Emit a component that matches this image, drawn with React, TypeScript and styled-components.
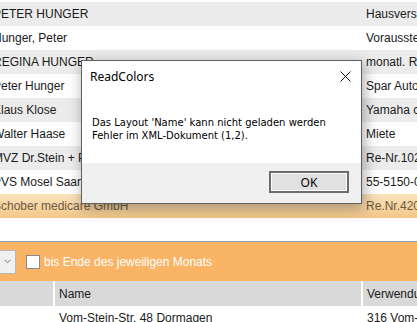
import React from "react";
import styled, {createGlobalStyle} from "styled-components";

type Row = {name: string, purpose: string};

const rows: Row[] = [
    {name: 'PETER HUNGER', purpose: 'Hausversicherung'},
    {name: 'Hunger, Peter', purpose: 'Voraussteuer'},
    {name: 'REGINA HUNGER', purpose: 'monatl. Rate'},
    {name: 'Peter Hunger', purpose: 'Spar Auto'},
    {name: 'Klaus Klose', purpose: 'Yamaha call'},
    {name: 'Walter Haase', purpose: 'Miete'},
    {name: 'MVZ Dr.Stein + Partner', purpose: 'Re-Nr.1020'},
    {name: 'PVS Mosel Saar', purpose: '55-5150-01'},
    {name: 'Schober medicare GmbH', purpose: 'Re.Nr.4200'},
];

const SELECTED = 8;

const App: React.FC = () => {
    return (
        <Page>
            <GlobalStyle/>
            <TopTable>
                {rows.map((r, i) => (
                    <TableRow key={i} $odd={i % 2 === 1} $selected={i === SELECTED}>
                        <NameCell>{r.name}</NameCell>
                        <PurposeCell>{r.purpose}</PurposeCell>
                    </TableRow>
                ))}
            </TopTable>
            <Spacer/>
            <FilterBar>
                <DropButton>
                    <svg width="7" height="5" viewBox="0 0 7 5">
                        <path d="M0.5 0.8 L3.5 3.8 L6.5 0.8" fill="none" stroke="#7a7a7a" strokeWidth="1"/>
                    </svg>
                </DropButton>
                <Check/>
                <FilterLabel>bis Ende des jeweiligen Monats</FilterLabel>
            </FilterBar>
            <HeaderRow>
                <HeaderCell/>
                <HeaderCell>Name</HeaderCell>
                <HeaderCell>Verwendungszweck</HeaderCell>
            </HeaderRow>
            <BodyRow>
                <BodyCell/>
                <BodyCell>Vom-Stein-Str. 48 Dormagen</BodyCell>
                <BodyCell>316 Vom-Stein</BodyCell>
            </BodyRow>

            <Dialog>
                <TitleBar>
                    <Title>ReadColors</Title>
                    <CloseIcon width="11" height="11" viewBox="0 0 11 11">
                        <path d="M0.5 0.5 L10.5 10.5 M10.5 0.5 L0.5 10.5" stroke="#111" strokeWidth="1"/>
                    </CloseIcon>
                </TitleBar>
                <Message>
                    Das Layout 'Name' kann nicht geladen werden<br/>
                    Fehler im XML-Dokument (1,2).
                </Message>
                <Footer>
                    <OkButton>OK</OkButton>
                </Footer>
            </Dialog>
        </Page>
    );
};

export default App;


const GlobalStyle = createGlobalStyle`
    html, body {
        margin: 0;
        padding: 0;
        background: #fff;
    }
    body {
        font-family: "Liberation Sans", Arial, sans-serif;
        color: #1a1a1a;
    }
`;

const Page = styled.div`
    position: relative;
    width: 417px;
    height: 322px;
    overflow: hidden;
`;

const TopTable = styled.div`
    padding-top: 2px;
`;

const TableRow = styled.div<{$odd: boolean, $selected: boolean}>`
    display: grid;
    grid-template-columns: 366px 1fr;
    height: 24px;
    align-items: center;
    font-size: 12px;
    white-space: nowrap;
    background: ${p => p.$selected
        ? 'linear-gradient(#fbe2bd, #f2c889)'
        : p.$odd ? '#ffffff' : '#ececec'};
    color: ${p => p.$selected ? '#6b5a44' : '#1a1a1a'};
`;

const NameCell = styled.div`
    overflow: hidden;
    margin-left: -7px;
`;

const PurposeCell = styled.div`
    overflow: hidden;
`;

const Spacer = styled.div`
    height: 23px;
    border-bottom: 1px solid #8ea2b8;
`;

const FilterBar = styled.div`
    display: flex;
    align-items: center;
    height: 39px;
    background: #f9b466;
`;

const DropButton = styled.div`
    display: flex;
    align-items: center;
    justify-content: center;
    width: 15px;
    height: 22px;
    margin-left: -1px;
    background: #f0f0f0;
    border: 1px solid #b8b8b8;
`;

const Check = styled.div`
    width: 12px;
    height: 12px;
    margin-left: 10px;
    background: #fff;
    border: 1px solid #8a8a8a;
`;

const FilterLabel = styled.span`
    margin-left: 4px;
    font-size: 12px;
    color: #fff;
`;

const HeaderRow = styled.div`
    display: grid;
    grid-template-columns: 53px 306px 1fr;
    column-gap: 2px;
    height: 25px;
    background: #fff;
    font-size: 12px;
    white-space: nowrap;
`;

const HeaderCell = styled.div`
    display: flex;
    align-items: center;
    padding-left: 4px;
    background: #d9d9d9;
    overflow: hidden;
`;

const BodyRow = styled.div`
    display: grid;
    grid-template-columns: 53px 306px 1fr;
    column-gap: 2px;
    height: 24px;
    font-size: 12px;
    white-space: nowrap;
`;

const BodyCell = styled.div`
    display: flex;
    align-items: center;
    padding-left: 4px;
    overflow: hidden;
`;

const Dialog = styled.div`
    position: absolute;
    left: 81px;
    top: 60px;
    width: 279px;
    height: 142px;
    display: flex;
    flex-direction: column;
    background: #fff;
    border: 1px solid #5f5f5f;
    box-shadow: 2px 4px 14px rgba(0, 0, 0, 0.35);
    font-family: "Noto Sans", "DejaVu Sans", sans-serif;
`;

const TitleBar = styled.div`
    display: flex;
    align-items: center;
    justify-content: space-between;
    height: 30px;
    padding: 0 10px 0 8px;
`;

const Title = styled.span`
    font-size: 12px;
    color: #000;
`;

const CloseIcon = styled.svg`
    display: block;
`;

const Message = styled.div`
    flex: 1;
    padding: 25px 0 0 10px;
    font-family: "DejaVu Sans", sans-serif;
    font-size: 10px;
    line-height: 13px;
    color: #000;
`;

const Footer = styled.div`
    display: flex;
    justify-content: flex-end;
    align-items: flex-start;
    height: 40px;
    padding: 8px 12px 0 0;
    box-sizing: border-box;
    background: #f0f0f0;
`;

const OkButton = styled.div`
    display: flex;
    align-items: center;
    justify-content: center;
    width: 76px;
    height: 18px;
    border: 2px solid #6d6d6d;
    box-shadow: inset 0 0 0 1px #fdfdfd;
    background: #e1e1e1;
    font-family: "Noto Sans", "DejaVu Sans", sans-serif;
    font-size: 12px;
    color: #000;
`;
